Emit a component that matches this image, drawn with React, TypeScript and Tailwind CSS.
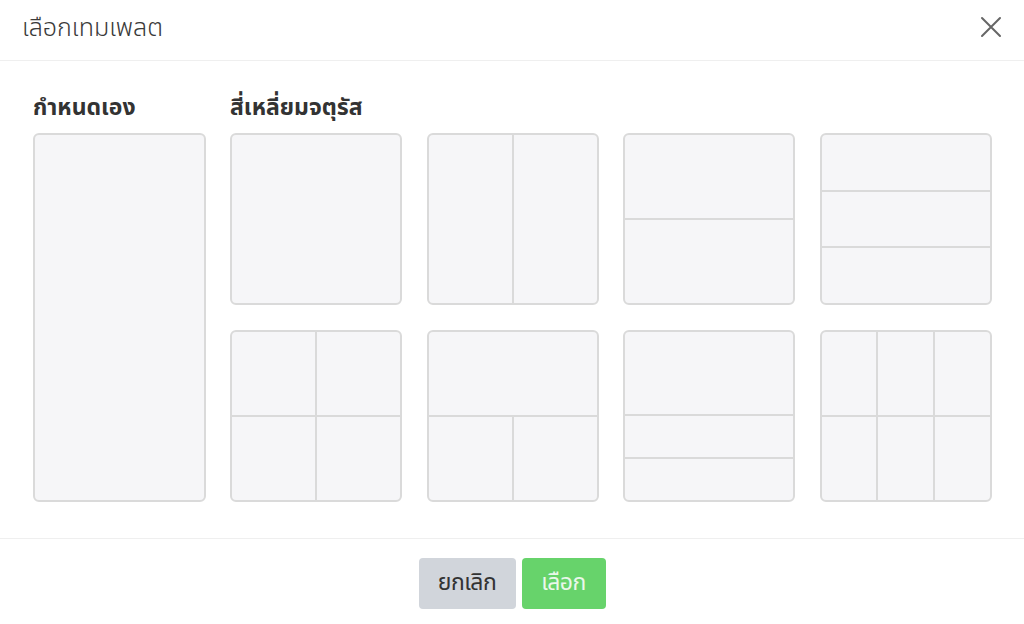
import React from "react";

const Tile = ({ children }: { children?: React.ReactNode }) => (
  <div className="w-[172px] h-[172px] border-2 border-[#dadada] rounded-[6px] bg-[#f6f6f8] overflow-hidden flex flex-col">
    {children}
  </div>
);

export default function App() {
  return (
    <div
      className="w-[1024px] h-[624px] bg-white flex flex-col"
      style={{ fontFamily: '"Noto Sans Thai", "Noto Sans", "DejaVu Sans", sans-serif' }}
    >
      <div className="h-[61px] flex items-center justify-between pl-[22px] pr-[22px] border-b border-[#efefef]">
        <div className="text-[25px] leading-[30px] text-[#3a3a3a] font-light mt-[-4px]">เลือกเทมเพลต</div>
        <svg width="22" height="22" viewBox="0 0 22 22" className="mt-[-6px]">
          <path d="M2 2 L20 20 M20 2 L2 20" stroke="#666" strokeWidth="2" strokeLinecap="round" />
        </svg>
      </div>
      <div className="flex-1 flex gap-[24px] pl-[33px] pt-[31px]">
        <div className="flex flex-col">
          <div className="h-[32px] mb-[9px] text-[23px] font-bold text-[#333] leading-[32px]">กำหนดเอง</div>
          <div className="w-[173px] h-[369px] border-2 border-[#dadada] rounded-[6px] bg-[#f6f6f8]" />
        </div>
        <div className="flex flex-col">
          <div className="h-[32px] mb-[9px] text-[23px] font-bold text-[#333] leading-[32px]">สี่เหลี่ยมจตุรัส</div>
          <div className="grid grid-cols-[172px_172px_172px_172px] gap-x-[24.5px] gap-y-[25px]">
            <Tile />
            <Tile>
              <div className="flex-1 flex divide-x-2 divide-[#dadada]">
                <div className="flex-1" />
                <div className="flex-1" />
              </div>
            </Tile>
            <Tile>
              <div className="flex-1 flex flex-col divide-y-2 divide-[#dadada]">
                <div className="flex-1" />
                <div className="flex-1" />
              </div>
            </Tile>
            <Tile>
              <div className="flex-1 flex flex-col divide-y-2 divide-[#dadada]">
                <div className="flex-1" />
                <div className="flex-1" />
                <div className="flex-1" />
              </div>
            </Tile>
            <Tile>
              <div className="flex-1 flex flex-col divide-y-2 divide-[#dadada]">
                <div className="flex-1 flex divide-x-2 divide-[#dadada]">
                  <div className="flex-1" />
                  <div className="flex-1" />
                </div>
                <div className="flex-1 flex divide-x-2 divide-[#dadada]">
                  <div className="flex-1" />
                  <div className="flex-1" />
                </div>
              </div>
            </Tile>
            <Tile>
              <div className="flex-1 flex flex-col divide-y-2 divide-[#dadada]">
                <div className="flex-1" />
                <div className="flex-1 flex divide-x-2 divide-[#dadada]">
                  <div className="flex-1" />
                  <div className="flex-1" />
                </div>
              </div>
            </Tile>
            <Tile>
              <div className="flex-1 flex flex-col divide-y-2 divide-[#dadada]">
                <div className="h-[84px]" />
                <div className="flex-1" />
                <div className="h-[41px]" />
              </div>
            </Tile>
            <Tile>
              <div className="flex-1 flex flex-col divide-y-2 divide-[#dadada]">
                <div className="flex-1 flex divide-x-2 divide-[#dadada]">
                  <div className="flex-1" />
                  <div className="flex-1" />
                  <div className="flex-1" />
                </div>
                <div className="flex-1 flex divide-x-2 divide-[#dadada]">
                  <div className="flex-1" />
                  <div className="flex-1" />
                  <div className="flex-1" />
                </div>
              </div>
            </Tile>
          </div>
        </div>
      </div>
      <div className="h-[86px] border-t border-[#efefef] flex items-start justify-center gap-[6px] pt-[19px]">
        <button className="w-[97px] h-[51px] rounded-[4px] bg-[#d1d5db] text-[23px] text-[#333] tracking-[-0.5px]">ยกเลิก</button>
        <button className="w-[84px] h-[51px] rounded-[4px] bg-[#67d36b] text-[23px] text-[#eaf7ea] tracking-[-0.5px]">เลือก</button>
      </div>
    </div>
  );
}
